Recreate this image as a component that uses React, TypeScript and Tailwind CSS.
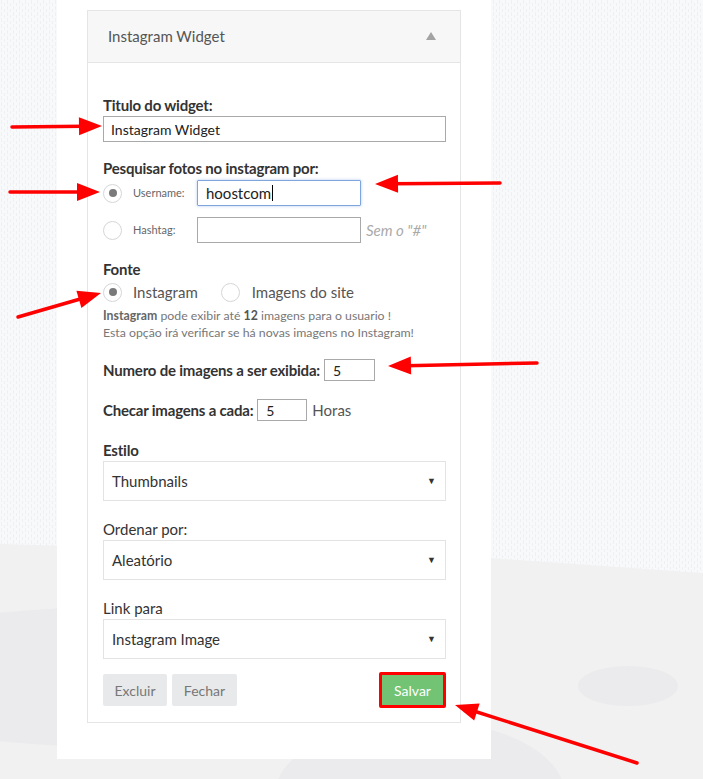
import React from 'react';

function Arrow({ x1, y1, x2, y2 }: { x1: number; y1: number; x2: number; y2: number }) {
  const angle = (Math.atan2(y2 - y1, x2 - x1) * 180) / Math.PI;
  const len = Math.hypot(x2 - x1, y2 - y1);
  return (
    <g transform={`translate(${x1} ${y1}) rotate(${angle})`}>
      <line x1={0} y1={0} x2={len - 18} y2={0} stroke="#ff0000" strokeWidth={3.5} strokeLinecap="round" />
      <polygon points={`${len - 23},-9 ${len},0 ${len - 23},9`} fill="#ff0000" />
    </g>
  );
}

function Background() {
  return (
    <svg className="absolute inset-0" width={703} height={779}>
      <defs>
        <pattern id="dots" width={6} height={6} patternUnits="userSpaceOnUse">
          <rect width={6} height={6} fill="#f8f9fb" />
          <rect x={1} y={0} width={1} height={4} fill="#eef0f4" />
          <rect x={4} y={3} width={1} height={4} fill="#eef0f4" />
        </pattern>
      </defs>
      <rect width={703} height={779} fill="url(#dots)" />
      <polygon points="0,544 490,558 703,573 703,779 0,779" fill="#f1f1f1" />
      <ellipse cx={120} cy={677} rx={300} ry={70} fill="#ebebed" />
      <ellipse cx={420} cy={795} rx={145} ry={75} fill="#ebebed" />
      <ellipse cx={628} cy={686} rx={50} ry={20} fill="#ebebed" />
    </svg>
  );
}

function Radio({ checked }: { checked?: boolean }) {
  return (
    <span className="flex h-[19px] w-[19px] shrink-0 items-center justify-center rounded-full border border-[#d6d6d6] bg-white">
      {checked && <span className="h-[8px] w-[8px] rounded-full bg-[#7a7a7a]" />}
    </span>
  );
}

function Select({ value }: { value: string }) {
  return (
    <div className="mt-px flex h-[40px] items-center justify-between border border-[#e3e3e3] bg-white pl-[8px] pr-[9px] text-[15px] text-[#333]">
      <span>{value}</span>
      <span className="text-[9px] text-[#333]">▼</span>
    </div>
  );
}

export default function App() {
  return (
    <div className="relative h-[779px] w-[703px] overflow-hidden font-['Lato',sans-serif]">
      <Background />

      <div className="relative ml-[57px] h-[759px] w-[434px] bg-white pt-[10px]">
        <div className="ml-[30px] w-[374px] border border-[#e5e5e5] bg-white">
          {/* header */}
          <div className="flex h-[52px] items-center justify-between border-b border-[#e5e5e5] bg-[#f7f7f7] pl-[20px] pr-[24px]">
            <span className="text-[15px] text-[#555]">Instagram Widget</span>
            <svg width={10} height={8} viewBox="0 0 10 8" className="mb-[1px]">
              <polygon points="5,0 10,8 0,8" fill="#a3a3a3" />
            </svg>
          </div>

          {/* body */}
          <div className="pb-[14px] pl-[15px] pr-[14px] pt-[32px] text-[#333]">
            <div className="text-[15px] font-bold leading-[20px] tracking-[-0.2px]">Titulo do widget:</div>
            <div className="mt-[1px] flex h-[26px] items-center border border-[#a9a9a9] pl-[7px] text-[14px] text-[#222]">
              Instagram Widget
            </div>

            <div className="mt-[16px] text-[15px] font-bold leading-[20px] tracking-[-0.2px]">
              Pesquisar fotos no instagram por:
            </div>
            <div className="mt-[2px] flex h-[26px] items-center">
              <Radio checked />
              <span className="ml-[11px] w-[64px] text-[11px] text-[#666]">Username:</span>
              <div className="flex h-[26px] w-[164px] items-center rounded-[1px] border border-[#7ea6dc] pl-[8px] text-[15px] text-[#222] shadow-[0_0_3px_rgba(102,150,230,0.5)]">
                hoostcom
                <span className="ml-[1px] inline-block h-[16px] w-px bg-black" />
              </div>
            </div>
            <div className="mt-[11px] flex h-[26px] items-center">
              <Radio />
              <span className="ml-[11px] w-[64px] text-[11px] text-[#666]">Hashtag:</span>
              <div className="h-[26px] w-[164px] border border-[#a9a9a9]" />
              <span className="ml-[5px] text-[15px] italic text-[#aaa]">Sem o "#"</span>
            </div>

            <div className="mt-[16px] text-[15px] font-bold leading-[20px] tracking-[-0.2px]">Fonte</div>
            <div className="mt-[3px] flex h-[20px] items-center text-[15px] text-[#555]">
              <Radio checked />
              <span className="ml-[11px]">Instagram</span>
              <span className="ml-[23px]">
                <Radio />
              </span>
              <span className="ml-[12px]">Imagens do site</span>
            </div>
            <div className="mt-[5px] text-[12.3px] leading-[17px] text-[#777]">
              <span className="font-bold text-[#666]">Instagram</span> pode exibir até{' '}
              <span className="font-bold text-[#555]">12</span> imagens para o usuario !
              <br />
              Esta opção irá verificar se há novas imagens no Instagram!
            </div>

            <div className="mt-[18px] flex h-[22px] items-center">
              <span className="text-[15px] font-bold tracking-[-0.2px]">Numero de imagens a ser exibida:</span>
              <div className="ml-[4px] flex h-[22px] w-[51px] items-center border border-[#a9a9a9] pl-[8px] text-[14px] text-[#222]">
                5
              </div>
            </div>
            <div className="mt-[18px] flex h-[22px] items-center">
              <span className="text-[15px] font-bold tracking-[-0.2px]">Checar imagens a cada:</span>
              <div className="ml-[4px] flex h-[22px] w-[50px] items-center border border-[#a9a9a9] pl-[8px] text-[14px] text-[#222]">
                5
              </div>
              <span className="ml-[5px] text-[15px] text-[#555]">Horas</span>
            </div>

            <div className="mt-[19px] text-[15px] font-bold leading-[20px] tracking-[-0.2px]">Estilo</div>
            <Select value="Thumbnails" />

            <div className="mt-[18px] text-[15px] leading-[20px]">Ordenar por:</div>
            <Select value="Aleatório" />

            <div className="mt-[18px] text-[15px] leading-[20px]">Link para</div>
            <Select value="Instagram Image" />

            <div className="mt-[13px] flex h-[36px] items-center">
              <button className="h-[32px] w-[64px] rounded-[2px] bg-[#e8e9ea] text-[14px] text-[#777]">Excluir</button>
              <button className="ml-[5px] h-[32px] w-[65px] rounded-[2px] bg-[#e8e9ea] text-[14px] text-[#777]">Fechar</button>
              <button className="ml-auto h-[36px] w-[67px] rounded-[2px] border-[3px] border-[#ff0000] bg-[#72c374] text-[14px] text-white">
                Salvar
              </button>
            </div>
          </div>
        </div>
      </div>

      <svg className="pointer-events-none absolute inset-0" width={703} height={779}>
        <Arrow x1={12} y1={127} x2={102} y2={126} />
        <Arrow x1={10} y1={192} x2={100} y2={192} />
        <Arrow x1={18} y1={317} x2={101} y2={293} />
        <Arrow x1={500} y1={183} x2={375} y2={184} />
        <Arrow x1={537} y1={363} x2={388} y2={366} />
        <Arrow x1={637} y1={763} x2={455} y2={705} />
      </svg>
    </div>
  );
}
